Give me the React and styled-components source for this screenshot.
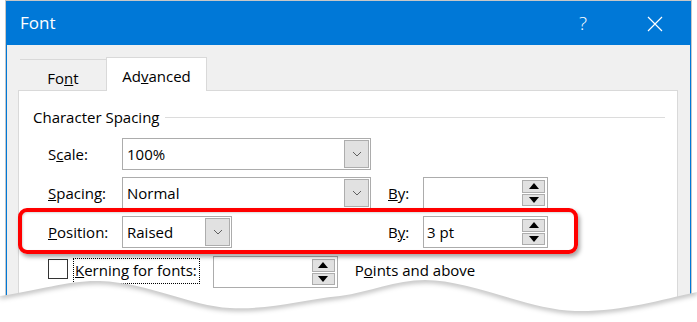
import React from 'react'
import styled, { createGlobalStyle } from 'styled-components'

const Global = createGlobalStyle`
  html, body { margin: 0; padding: 0; background: #fff; }
  body { font-family: "Open Sans", "Noto Sans", sans-serif; color: #000; }
  * { box-sizing: border-box; }
`

const Page = styled.div`
  position: relative;
  width: 697px;
  height: 322px;
  overflow: hidden;
  background: #fff;
  padding: 1px 0 0 6px;
`

const Window = styled.div`
  width: 685px;
  height: 360px;
  border: 1px solid #0078d7;
  box-shadow: 0 0 0 1px rgba(0, 0, 0, 0.22);
  display: flex;
  flex-direction: column;
`

const TitleBar = styled.div`
  height: 43px;
  background: #0078d7;
  color: #fff;
  display: flex;
  align-items: center;
  padding-left: 13px;
  flex-shrink: 0;
`

const Title = styled.div`
  font-size: 17px;
  flex: 1;
  margin-top: -2px;
`

const HelpMark = styled.div`
  font-size: 19px;
  font-weight: 300;
  width: 20px;
  margin-right: 48px;
  margin-top: -2px;
`

const CloseBtn = styled.div`
  width: 16px;
  height: 16px;
  margin-right: 27px;
  display: flex;
`

const Body = styled.div`
  flex: 1;
  background: #f0f0f0;
  padding: 12px 12px 0 11px;
  display: flex;
  flex-direction: column;
`

const TabStrip = styled.div`
  display: flex;
  align-items: flex-end;
  padding-left: 2px;
  height: 34px;
  margin-bottom: -1px;
  position: relative;
  z-index: 1;
`

const Tab = styled.div`
  width: ${p => p.$w}px;
  height: ${p => (p.$active ? 34 : 32)}px;
  font-size: 15px;
  display: flex;
  justify-content: center;
  align-items: center;
  padding-top: ${p => (p.$active ? 2 : 4)}px;
  background: ${p => (p.$active ? '#fff' : 'transparent')};
  border-top: 1px solid #d9d9d9;
  border-left: ${p => (p.$active ? '1px solid #d9d9d9' : 'none')};
  border-right: ${p => (p.$active ? '1px solid #d9d9d9' : 'none')};
`

const Panel = styled.div`
  flex: 1;
  background: #fff;
  border: 1px solid #d9d9d9;
  padding: 16px 12px 0 14px;
`

const GroupHead = styled.div`
  display: flex;
  align-items: center;
  height: 20px;
  font-size: 15px;
  gap: 6px;
  &::after {
    content: '';
    flex: 1;
    height: 1px;
    background: #dcdcdc;
    margin-top: 1px;
  }
`

const Rows = styled.div`
  padding-left: 15px;
  margin-top: 11px;
  display: flex;
  flex-direction: column;
  gap: 7px;
`

const Row = styled.div`
  position: relative;
  display: grid;
  grid-template-columns: 74px 266px 35px 125px;
  align-items: center;
  height: 32px;
  width: 500px;
  ${p =>
    p.$highlight &&
    `
    &::after {
      content: '';
      position: absolute;
      top: -8px;
      bottom: -6px;
      left: -30px;
      right: -30px;
      border: 4px solid #ff0000;
      border-radius: 9px;
      box-shadow: 2px 3px 4px rgba(0,0,0,0.35), inset 1px 1px 2px rgba(0,0,0,0.15);
      pointer-events: none;
    }
  `}
`

const Label = styled.div`
  font-size: 15px;
  white-space: nowrap;
`

const Combo = styled.div`
  width: ${p => p.$w}px;
  height: 32px;
  border: 1px solid #acacac;
  display: flex;
  align-items: center;
  padding-left: 4px;
  font-size: 15px;
  background: #fff;
`

const DropBtn = styled.div`
  margin-left: auto;
  margin-right: 1px;
  width: 25px;
  height: 28px;
  background: #e1e1e1;
  border: 1px solid #adadad;
  display: flex;
  align-items: center;
  justify-content: center;
`

const Spin = styled.div`
  width: 125px;
  height: 32px;
  border: 1px solid #acacac;
  display: flex;
  align-items: center;
  padding: 2px 2px 2px 3px;
  font-size: 15px;
  background: #fff;
`

const SpinBtns = styled.div`
  margin-left: auto;
  width: 23px;
  height: 100%;
  display: flex;
  flex-direction: column;
  gap: 1px;
`

const SpinBtn = styled.div`
  flex: 1;
  background: #e1e1e1;
  border: 1px solid #adadad;
  display: flex;
  align-items: center;
  justify-content: center;
`

const KernRow = styled.div`
  display: flex;
  align-items: flex-start;
  height: 32px;
  margin-top: 1px;
`

const Check = styled.div`
  width: 20px;
  height: 20px;
  border: 1px solid #333;
  background: #fff;
  margin: 3px 5px 0 0;
`

const FocusLabel = styled.div`
  font-size: 15px;
  border: 1px dotted #000;
  padding: 1px 2px 3px 1px;
  margin: 2px 13px 0 0;
`

const After = styled.div`
  font-size: 15px;
  margin: 4px 0 0 17px;
`

const Tear = styled.svg`
  position: absolute;
  left: 0;
  bottom: 0;
  width: 697px;
  height: 56px;
`

const WAVE = 'M0,30 C40,24 70,14 100,15 C150,17 190,40 230,42 C270,44 300,34 340,30 C370,26 395,14 425,14 C470,14 530,44 575,45 C620,46 660,34 697,26'

const Chevron = () => (
  <svg width="10" height="6" viewBox="0 0 10 6">
    <polyline points="1,1 5,5 9,1" fill="none" stroke="#606060" strokeWidth="1" />
  </svg>
)

const Arrow = ({ up }) => (
  <svg width="10" height="6" viewBox="0 0 10 6">
    <polygon points={up ? '0,6 10,6 5,0' : '0,0 10,0 5,6'} fill="#000" />
  </svg>
)

const SpinBox = ({ value }) => (
  <Spin>
    {value}
    <SpinBtns>
      <SpinBtn><Arrow up /></SpinBtn>
      <SpinBtn><Arrow /></SpinBtn>
    </SpinBtns>
  </Spin>
)

const ComboBox = ({ w, value }) => (
  <Combo $w={w}>
    {value}
    <DropBtn><Chevron /></DropBtn>
  </Combo>
)

export default function App() {
  return (
    <Page>
      <Global />
      <Window>
        <TitleBar>
          <Title>Font</Title>
          <HelpMark>?</HelpMark>
          <CloseBtn>
            <svg width="16" height="16" viewBox="0 0 16 16">
              <path d="M1 1 L15 15 M15 1 L1 15" stroke="#fff" strokeWidth="1.2" />
            </svg>
          </CloseBtn>
        </TitleBar>
        <Body>
          <TabStrip>
            <Tab $w={86}>Fo<u>n</u>t</Tab>
            <Tab $w={101} $active>Ad<u>v</u>anced</Tab>
          </TabStrip>
          <Panel>
            <GroupHead>Character Spacing</GroupHead>
            <Rows>
              <Row>
                <Label>S<u>c</u>ale:</Label>
                <ComboBox w={249} value="100%" />
              </Row>
              <Row>
                <Label><u>S</u>pacing:</Label>
                <ComboBox w={249} value="Normal" />
                <Label><u>B</u>y:</Label>
                <SpinBox value="" />
              </Row>
              <Row $highlight>
                <Label><u>P</u>osition:</Label>
                <ComboBox w={110} value="Raised" />
                <Label>B<u>y</u>:</Label>
                <SpinBox value="3 pt" />
              </Row>
              <KernRow>
                <Check />
                <FocusLabel><u>K</u>erning for fonts:</FocusLabel>
                <SpinBox value="" />
                <After>P<u>o</u>ints and above</After>
              </KernRow>
            </Rows>
          </Panel>
        </Body>
      </Window>
      <Tear viewBox="0 0 697 56">
        <defs>
          <filter id="blur" x="-5%" y="-50%" width="110%" height="200%">
            <feGaussianBlur stdDeviation="2.5" />
          </filter>
          <clipPath id="below">
            <path d={`${WAVE} L697,56 L0,56 Z`} />
          </clipPath>
        </defs>
        <path d={`${WAVE} L697,56 L0,56 Z`} fill="#fff" />
        <g clipPath="url(#below)">
          <path d={WAVE} fill="none" stroke="rgba(0,0,0,0.28)" strokeWidth="5" filter="url(#blur)" />
        </g>
      </Tear>
    </Page>
  )
}
